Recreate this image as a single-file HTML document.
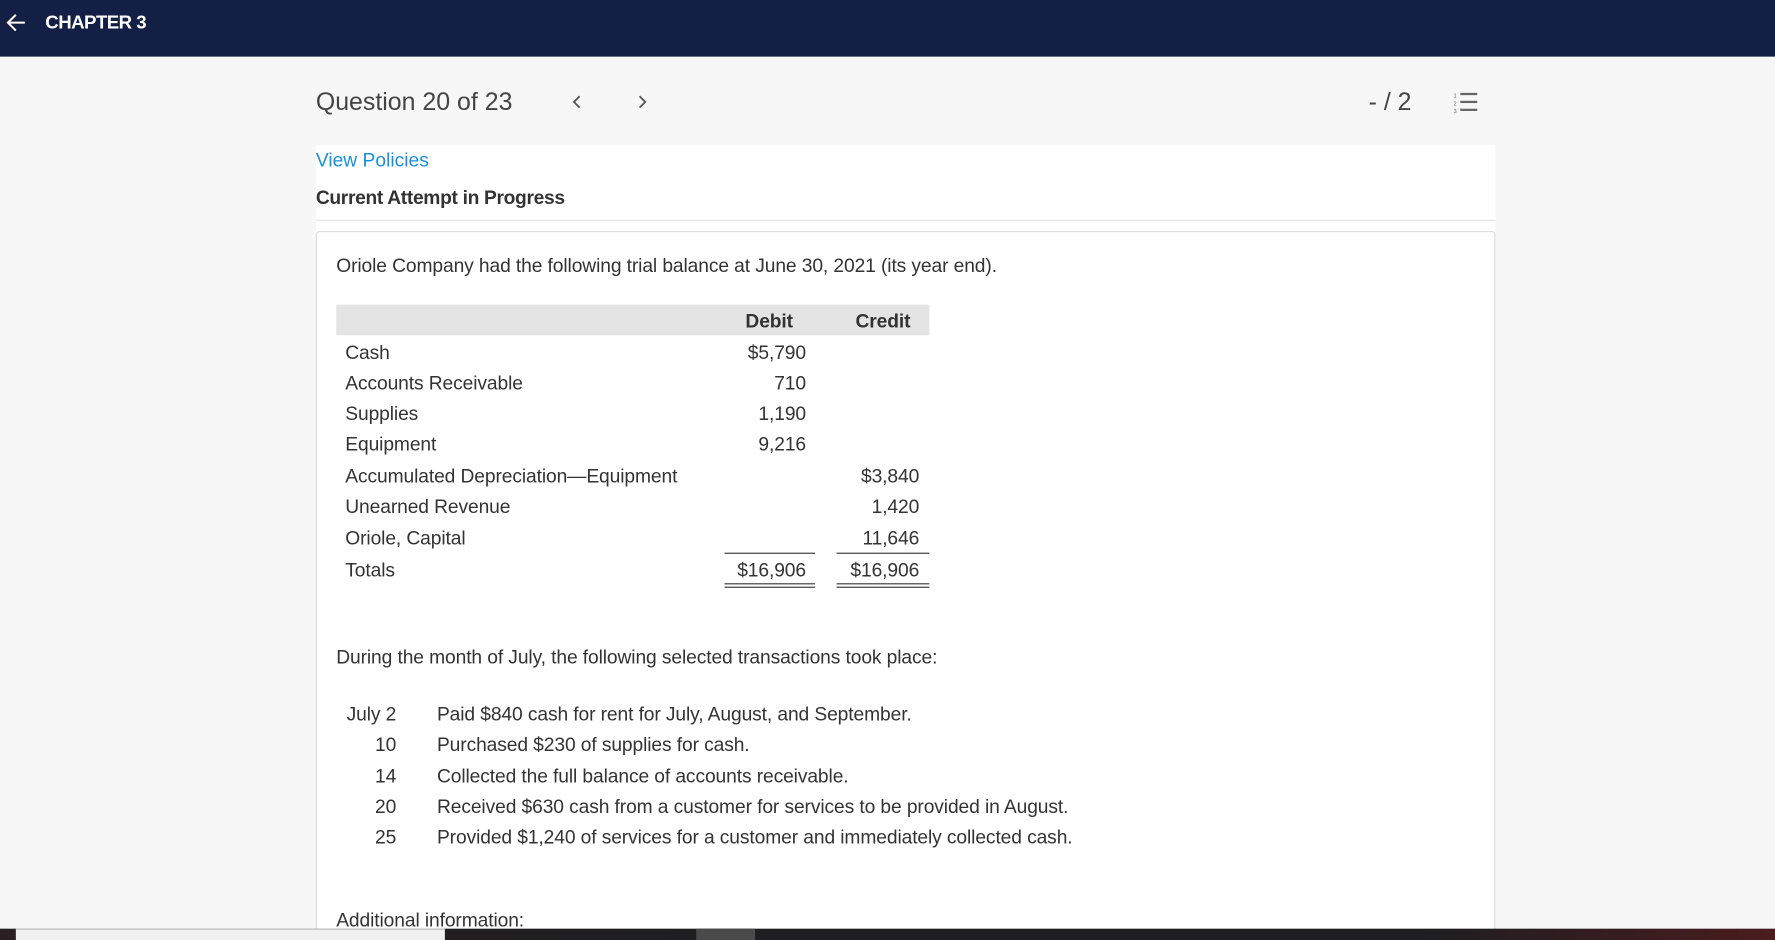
<!DOCTYPE html>
<html><head><meta charset="utf-8"><style>
html,body{margin:0;padding:0;width:1775px;height:940px;overflow:hidden;background:#f7f7f7}
#s{position:absolute;left:0;top:0;width:1568px;height:830px;overflow:hidden;transform:scale(1.13202,1.13253);transform-origin:0 0;font-family:"Liberation Sans",sans-serif;color:#333;background:#f7f7f7}
.a{position:absolute;white-space:nowrap;line-height:20px}
.t{font-size:17px;color:#333;letter-spacing:-0.1px}
.r{text-align:right}
</style></head><body><div id="s">
<div class="a" style="left:0;top:0;width:1568px;height:50px;background:#141f45"></div>
<svg class="a" style="left:5px;top:11px" width="20" height="18" viewBox="0 0 20 18"><path d="M17 9H3M9 2L2 9l7 7" stroke="#fff" stroke-width="1.8" fill="none"/></svg>
<div class="a" style="left:40px;top:10px;color:#fff;font-weight:bold;font-size:16.5px;letter-spacing:-0.5px">CHAPTER 3</div>
<div class="a" style="left:279px;top:77px;font-size:22px;line-height:26px;color:#444">Question 20 of 23</div>
<svg class="a" style="left:504px;top:82px" width="12" height="16"><path d="M8 3L3 8l5 5" stroke="#555" stroke-width="1.6" fill="none"/></svg>
<svg class="a" style="left:561px;top:82px" width="12" height="16"><path d="M4 3l5 5-5 5" stroke="#555" stroke-width="1.6" fill="none"/></svg>
<div class="a" style="left:1209px;top:77px;font-size:22px;line-height:26px;color:#444">- / 2</div>
<svg class="a" style="left:1283px;top:80px" width="24" height="20"><g fill="#666"><rect x="7" y="2" width="15" height="2"/><rect x="7" y="9" width="15" height="2"/><rect x="7" y="16" width="15" height="2"/><text x="1" y="6" font-size="5" font-family="Liberation Sans">1</text><text x="1" y="13" font-size="5" font-family="Liberation Sans">2</text><text x="1" y="20" font-size="5" font-family="Liberation Sans">3</text></g></svg>
<div class="a" style="left:279px;top:128px;width:1042px;height:700px;background:#fff"></div>
<div class="a" style="left:279px;top:132px;font-size:17px;color:#1a8fdb">View Policies</div>
<div class="a" style="left:279px;top:165px;font-size:17px;color:#333;font-weight:bold;letter-spacing:-0.3px">Current Attempt in Progress</div>
<div class="a" style="left:279px;top:194px;width:1042px;height:1px;background:#e4e4e4"></div>
<div class="a" style="left:279px;top:204px;width:1040px;height:640px;border:1px solid #ddd;border-radius:3px;background:#fff"></div>
<div class="a t" style="left:297px;top:225px">Oriole Company had the following trial balance at June 30, 2021 (its year end).</div>
<div class="a" style="left:297px;top:269px;width:524px;height:27px;background:#e4e4e4"></div>
<div class="a t" style="left:640px;top:274px;width:79px;text-align:center;font-weight:bold;color:#333">Debit</div>
<div class="a t" style="left:739px;top:274px;width:82px;text-align:center;font-weight:bold;color:#333">Credit</div>
<div class="a t" style="left:305px;top:302px">Cash</div><div class="a t r" style="left:612px;top:302px;width:100px">$5,790</div>
<div class="a t" style="left:305px;top:329px">Accounts Receivable</div><div class="a t r" style="left:612px;top:329px;width:100px">710</div>
<div class="a t" style="left:305px;top:356px">Supplies</div><div class="a t r" style="left:612px;top:356px;width:100px">1,190</div>
<div class="a t" style="left:305px;top:383px">Equipment</div><div class="a t r" style="left:612px;top:383px;width:100px">9,216</div>
<div class="a t" style="left:305px;top:411px">Accumulated Depreciation—Equipment</div><div class="a t r" style="left:712px;top:411px;width:100px">$3,840</div>
<div class="a t" style="left:305px;top:438px">Unearned Revenue</div><div class="a t r" style="left:712px;top:438px;width:100px">1,420</div>
<div class="a t" style="left:305px;top:466px">Oriole, Capital</div><div class="a t r" style="left:712px;top:466px;width:100px">11,646</div>
<div class="a" style="left:640px;top:488px;width:80px;height:1px;background:#333"></div>
<div class="a" style="left:739px;top:488px;width:82px;height:1px;background:#333"></div>
<div class="a t" style="left:305px;top:494px">Totals</div><div class="a t r" style="left:612px;top:494px;width:100px">$16,906</div><div class="a t r" style="left:712px;top:494px;width:100px">$16,906</div>
<div class="a" style="left:640px;top:515px;width:80px;height:1px;background:#333;box-shadow:0 3px 0 #333"></div>
<div class="a" style="left:739px;top:515px;width:82px;height:1px;background:#333;box-shadow:0 3px 0 #333"></div>
<div class="a t" style="left:297px;top:571px">During the month of July, the following selected transactions took place:</div>
<div class="a t r" style="left:290px;top:621px;width:60px">July 2</div><div class="a t" style="left:386px;top:621px">Paid $840 cash for rent for July, August, and September.</div>
<div class="a t r" style="left:290px;top:648px;width:60px">10</div><div class="a t" style="left:386px;top:648px">Purchased $230 of supplies for cash.</div>
<div class="a t r" style="left:290px;top:676px;width:60px">14</div><div class="a t" style="left:386px;top:676px">Collected the full balance of accounts receivable.</div>
<div class="a t r" style="left:290px;top:703px;width:60px">20</div><div class="a t" style="left:386px;top:703px">Received $630 cash from a customer for services to be provided in August.</div>
<div class="a t r" style="left:290px;top:730px;width:60px">25</div><div class="a t" style="left:386px;top:730px">Provided $1,240 of services for a customer and immediately collected cash.</div>
<div class="a t" style="left:297px;top:803px">Additional information:</div>
<div class="a" style="left:0;top:820px;width:1568px;height:10px;background:linear-gradient(90deg,#2a1f22 0,#1e1e22 40%,#1e1e22 80%,#4a1c1e 100%)"></div>
<div class="a" style="left:14px;top:820px;width:379px;height:10px;background:#f0f0f0;border-top:1px solid #bbb;box-sizing:border-box"></div>
<div class="a" style="left:615px;top:820px;width:52px;height:10px;background:#4a4a4a"></div>
</div></body></html>
